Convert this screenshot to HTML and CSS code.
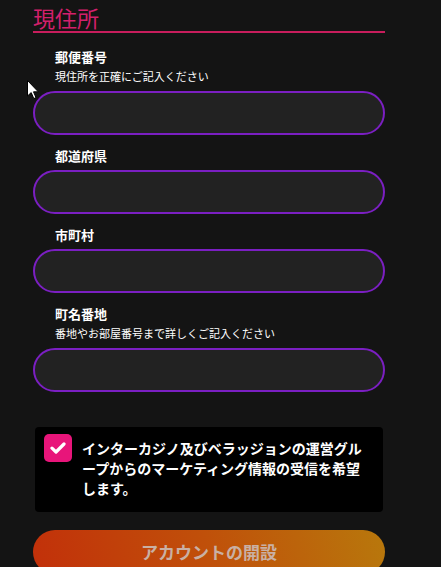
FILE: index.html
```html
<!DOCTYPE html>
<html lang="ja">
<head>
<meta charset="utf-8">
<link rel="stylesheet" href="styles.css">
</head>
<body>
<div class="page">
  <h2 class="title">現住所</h2>

  <div class="field first">
    <div class="label">郵便番号</div>
    <div class="sub">現住所を正確にご記入ください</div>
    <div class="input"></div>
  </div>

  <div class="field">
    <div class="label">都道府県</div>
    <div class="input"></div>
  </div>

  <div class="field">
    <div class="label">市町村</div>
    <div class="input"></div>
  </div>

  <div class="field">
    <div class="label">町名番地</div>
    <div class="sub">番地やお部屋番号まで詳しくご記入ください</div>
    <div class="input"></div>
  </div>

  <div class="consent">
    <div class="check">
      <svg width="16" height="12" viewBox="0 0 16 12"><path d="M2 6.2 L6 10 L14 2" fill="none" stroke="#fff" stroke-width="3.2" stroke-linecap="round" stroke-linejoin="round"/></svg>
    </div>
    <p class="consent-text">インターカジノ及びベラッジョンの運営グループからのマーケティング情報の受信を希望します。</p>
  </div>

  <div class="submit">アカウントの開設</div>
</div>
<svg class="cursor" width="12" height="20" viewBox="0 0 12 20"><path d="M0.5 0.5 L0.5 16 L4.2 12.6 L6.8 18.6 L9 17.6 L6.5 11.8 L11.3 11.8 Z" fill="#fff" stroke="#000" stroke-width="1"/></svg>
</body>
</html>
```

FILE: styles.css
```css
html, body {
  margin: 0;
  padding: 0;
  background: #141414;
  font-family: "Noto Sans CJK JP", "Noto Sans", sans-serif;
  color: #fff;
}
body {
  position: relative;
  height: 567px;
  overflow: hidden;
}
.page {
  width: 352px;
  margin-left: 33px;
}
.title {
  margin: 0;
  padding-top: 4px;
  font-size: 22px;
  line-height: 26px;
  font-weight: 400;
  color: #d3206c;
  border-bottom: 2px solid #c81d5c;
  height: 27px;
}
.field {
  margin-top: 12px;
}
.field.first {
  margin-top: 15px;
}
.label {
  padding-left: 22px;
  font-size: 13px;
  line-height: 18px;
  font-weight: 700;
  margin-bottom: 5px;
}
.sub {
  padding-left: 22px;
  font-size: 11px;
  line-height: 16px;
  margin-top: -3px;
  margin-bottom: 7px;
}
.input {
  height: 40px;
  border: 2px solid #7b1fc2;
  border-radius: 22px;
  background: #222;
}
.consent {
  margin: 35px 2px 0 2px;
  background: #000;
  border-radius: 4px;
  padding: 11px 10px 14px 9px;
  display: flex;
  gap: 10px;
  align-items: flex-start;
}
.check {
  flex: none;
  width: 28px;
  height: 28px;
  margin-top: -4px;
  border-radius: 5px;
  background: #e8157a;
  display: flex;
  align-items: center;
  justify-content: center;
}
.consent-text {
  margin: 0;
  font-size: 14px;
  line-height: 20px;
  font-weight: 700;
  width: 290px;
}
.submit {
  margin-top: 18px;
  height: 44px;
  border-radius: 22px;
  background: linear-gradient(75deg, #c2300a 0%, #c0500a 50%, #b8780c 100%);
  color: #c9b0a4;
  font-size: 17px;
  font-weight: 700;
  line-height: 44px;
  text-align: center;
}
.cursor {
  position: absolute;
  left: 27px;
  top: 80px;
}
```
